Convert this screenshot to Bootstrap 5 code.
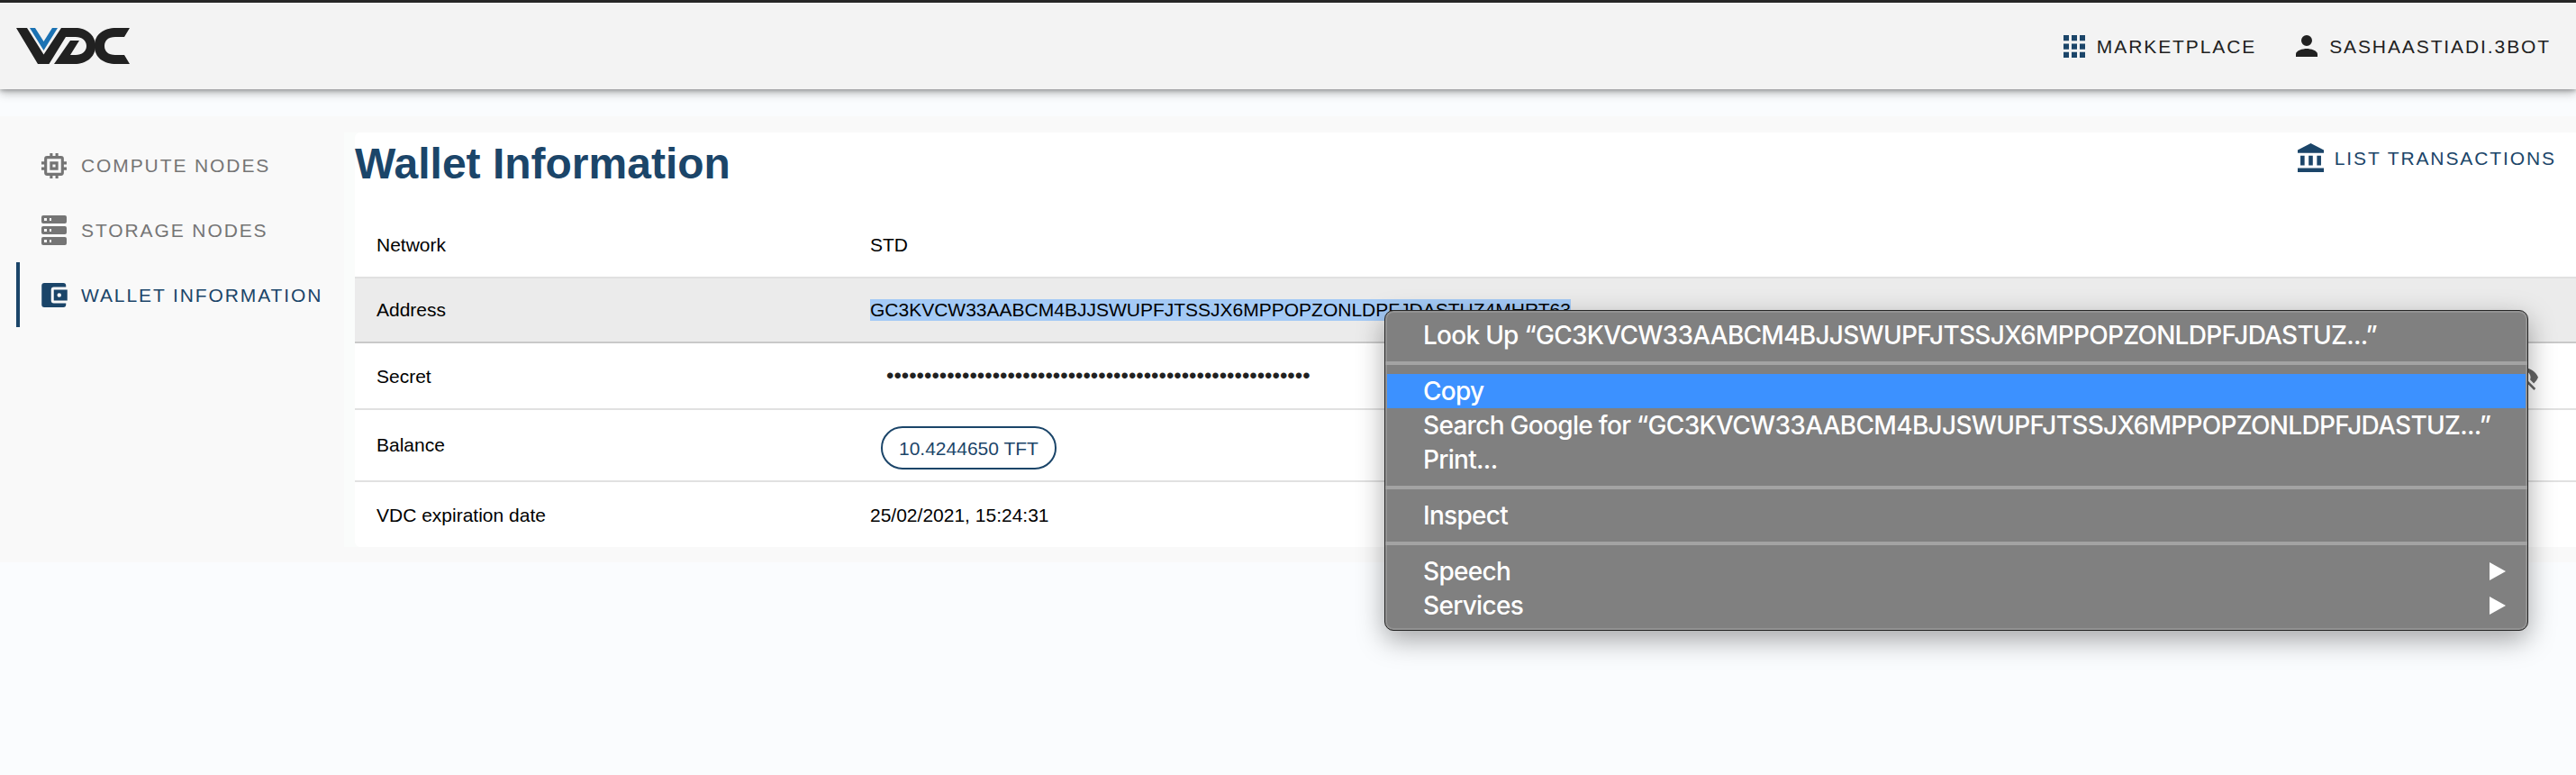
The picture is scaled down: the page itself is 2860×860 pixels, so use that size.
<!DOCTYPE html>
<html lang="en">
<head>
<meta charset="utf-8">
<title>VDC - Wallet Information</title>
<link href="https://cdn.jsdelivr.net/npm/bootstrap@5.3.0/dist/css/bootstrap.min.css" rel="stylesheet">
<style>
:root{--navy:#1b4569}
body{font-family:"Liberation Sans",Arial,sans-serif;font-size:21px;line-height:24px;color:#000;background:#fafcfe;height:860px;overflow:hidden;position:relative}
a{text-decoration:none;color:inherit}
svg{display:block;flex:none}
.topbar{height:99px;border-top:3px solid #262626;background:#f3f3f3;box-shadow:0 4px 10px rgba(0,0,0,.28),0 2px 4px rgba(0,0,0,.2);padding:0 28px 0 18px;margin-bottom:30px;position:relative}
.caps{letter-spacing:1.9px;text-transform:uppercase;white-space:nowrap}
.caps span{padding-top:2px}
.topbar .caps{color:#212121}
.shell{height:495px;background:#f9f9f9;padding-top:18px}
.side{width:382px;padding-left:18px;height:460px}
.side a{height:72px;padding-left:24px;border-left:4px solid transparent;color:#757575}
.side a.on{border-color:var(--navy);color:var(--navy)}
.side span{margin-left:16px}
.side svg{margin-top:1px}
.main-wrap{padding-left:12px;background:#fafcfb;height:460px}
.panel{background:#fff;border-radius:6px 0 0 6px;height:460px}
.panel-head{height:90px;padding-right:22px}
.panel-head h1{font-size:48px;line-height:56px;font-weight:700;color:var(--navy);margin:7px 0 0}
.rowline{height:72px;border-bottom:2px solid #e1e1e1;padding-left:24px}
.rowline>:first-child{width:548px}
.rowline.hov{background:#ebebeb;border-color:#c9c9c9}
.sel{background:#a4caf6}
.dots{font-size:24px;color:#212121;padding-left:18px}
.pill{border:2px solid var(--navy);border-radius:24px;height:48px;color:var(--navy);padding:1px 18px 0;margin:6px 0 0 12px;letter-spacing:0}
.ctx{position:absolute;left:1537px;top:344px;width:1270px;height:356px;border:1px solid #262626;border-radius:10px;background:#808080;box-shadow:inset 0 0 0 2px #929292,0 10px 30px rgba(0,0,0,.35);padding:8px 0;color:#fff;font:500 28px/38px Inter,sans-serif;letter-spacing:-.7px}
.ctx div{height:38px;padding:0 24px 0 42px;white-space:nowrap}
.ctx .hot{background:#3c91ff;margin:0 2px;padding-left:40px}
.ctx hr{height:4px;border:0;background:#a3a3a3;opacity:1;margin:10px 0}
</style>
</head>
<body>
<header class="topbar d-flex align-items-center justify-content-between">
<svg width="127" height="40" viewBox="0 0 127 40"><path fill="#212121" d="M0 0h12L30.500 29.500 50 0H66C77 0 88 7 88 20S77 40 65 40H42L60 14H70L60 30H66C73 30 78 26 78 20S73 10 66 10H55L36.500 40H24Z"/><path fill="#1b72b3" d="M15 0h6l9.500 15L40 0h6L30.500 25Z"/><path fill="#212121" d="M126 0H111C97 0 87 7 87 20S97 40 111 40H126L120 30H110C102 30 98 26 98 20S102 10 110 10H120Z"/></svg>
<nav class="d-flex align-items-center" style="gap:44px">
<a href="#" class="caps d-flex align-items-center" style="gap:13px"><svg width="24" height="25" viewBox="0 0 24 24" preserveAspectRatio="none" fill="#1b4569"><path d="M0 0h6v6H0zM9 0h6v6H9zM18 0h6v6h-6zM0 9h6v6H0zM9 9h6v6H9zM18 9h6v6h-6zM0 18h6v6H0zM9 18h6v6H9zM18 18h6v6h-6z"/></svg><span>Marketplace</span></a>
<a href="#" class="caps d-flex align-items-center" style="gap:13px"><svg width="24" height="24" viewBox="4 4 16 16" fill="#212121"><path d="M12 12a4 4 0 1 0 0-8 4 4 0 0 0 0 8zM12 14c-2.670 0-8 1.340-8 4v2h16v-2c0-2.660-5.330-4-8-4z"/></svg><span>sashaastiadi.3bot</span></a>
</nav>
</header>
<div class="shell d-flex">
<nav class="side d-flex flex-column flex-shrink-0">
<a href="#" class="caps d-flex align-items-center"><svg width="28" height="28" viewBox="3 3 18 18" fill="#757575"><path fill-rule="evenodd" d="M15 9H9v6h6V9zm-2 4h-2v-2h2v2zm8-2V9h-2V7a2 2 0 0 0-2-2h-2V3h-2v2h-2V3H9v2H7a2 2 0 0 0-2 2v2H3v2h2v2H3v2h2v2a2 2 0 0 0 2 2h2v2h2v-2h2v2h2v-2h2a2 2 0 0 0 2-2v-2h2v-2h-2v-2h2zm-4 6H7V7h10v10z"/></svg><span>Compute nodes</span></a>
<a href="#" class="caps d-flex align-items-center"><svg width="28" height="33" viewBox="0 0 28 33"><g fill="#757575"><rect width="28" height="9" rx="2"/><rect y="12" width="28" height="9" rx="2"/><rect y="24" width="28" height="9" rx="2"/></g><path fill="#f9f9f9" d="M3 3h3v3H3zM9 3h2v3H9zM3 15h3v3H3zM9 15h2v3H9zM3 27h3v3H3zM9 27h2v3H9z"/></svg><span>Storage nodes</span></a>
<a href="#" class="caps on d-flex align-items-center"><svg width="29" height="27" viewBox="3 3 19 18" fill="#1b4569"><path fill-rule="evenodd" d="M21 18v1a2 2 0 0 1-2 2H5a2 2 0 0 1-2-2V5a2 2 0 0 1 2-2h14a2 2 0 0 1 2 2v1h-9a2 2 0 0 0-2 2v8a2 2 0 0 0 2 2h9zm-9-2h10V8H12v8zm4-2.500a1.500 1.500 0 1 1 0-3 1.500 1.500 0 0 1 0 3z"/></svg><span style="margin-left:15px">Wallet information</span></a>
</nav>
<main class="main-wrap flex-grow-1"><div class="panel">
<div class="panel-head d-flex justify-content-between"><h1>Wallet Information</h1>
<a href="#" class="caps d-flex align-items-center" style="height:56px;gap:12px;color:var(--navy)"><svg width="29" height="32" viewBox="2 1 19 21" preserveAspectRatio="none" fill="#1b4569"><path d="M4 10v7h3v-7H4zm6 0v7h3v-7h-3zM2 22h19v-3H2v3zm14-12v7h3v-7h-3zM11.500 1L2 6v2h19V6l-9.500-5z"/></svg><span>List transactions</span></a></div>
<div class="rowline d-flex align-items-center"><span>Network</span><span>STD</span></div>
<div class="rowline hov d-flex align-items-center"><span>Address</span><span class="sel">GC3KVCW33AABCM4BJJSWUPFJTSSJX6MPPOPZONLDPFJDASTUZ4MHRT63</span></div>
<div class="rowline d-flex align-items-center" style="height:74px"><span style="padding-top:2px">Secret</span><span class="dots">••••••••••••••••••••••••••••••••••••••••••••••••••••••••</span><svg class="ms-auto" style="margin:4px 42px 0 0" width="31" height="27" viewBox="1 3 22 19" fill="#666"><path d="M12 7a5 5 0 0 1 4.640 6.830l2.920 2.920A11.800 11.800 0 0 0 22.990 12C21.260 7.610 16.990 4.500 11.990 4.500c-1.400 0-2.740.250-3.980.700l2.160 2.160C10.740 7.130 11.350 7 12 7zM2 4.270l17.730 17.730L21 20.730 3.270 3 2 4.270z"/></svg></div>
<div class="rowline d-flex align-items-center" style="height:80px"><span style="padding-bottom:1px">Balance</span><span class="pill d-flex align-items-center">10.4244650 TFT</span></div>
<div class="rowline d-flex align-items-center border-0" style="padding-top:2px"><span>VDC expiration date</span><span>25/02/2021, 15:24:31</span></div>
</div></main>
</div>
<div class="ctx">
<div style="letter-spacing:-.73px">Look Up “GC3KVCW33AABCM4BJJSWUPFJTSSJX6MPPOPZONLDPFJDASTUZ...”</div><hr>
<div class="hot">Copy</div><div>Search Google for “GC3KVCW33AABCM4BJJSWUPFJTSSJX6MPPOPZONLDPFJDASTUZ...”</div><div>Print...</div><hr>
<div>Inspect</div><hr>
<div class="d-flex justify-content-between align-items-center"><span>Speech</span><svg width="18" height="20" fill="#fff"><path d="M0 0l18 10L0 20z"/></svg></div>
<div class="d-flex justify-content-between align-items-center"><span>Services</span><svg width="18" height="20" fill="#fff"><path d="M0 0l18 10L0 20z"/></svg></div>
</div>
<script src="https://cdn.jsdelivr.net/npm/bootstrap@5.3.0/dist/js/bootstrap.bundle.min.js"></script>
</body>
</html>
